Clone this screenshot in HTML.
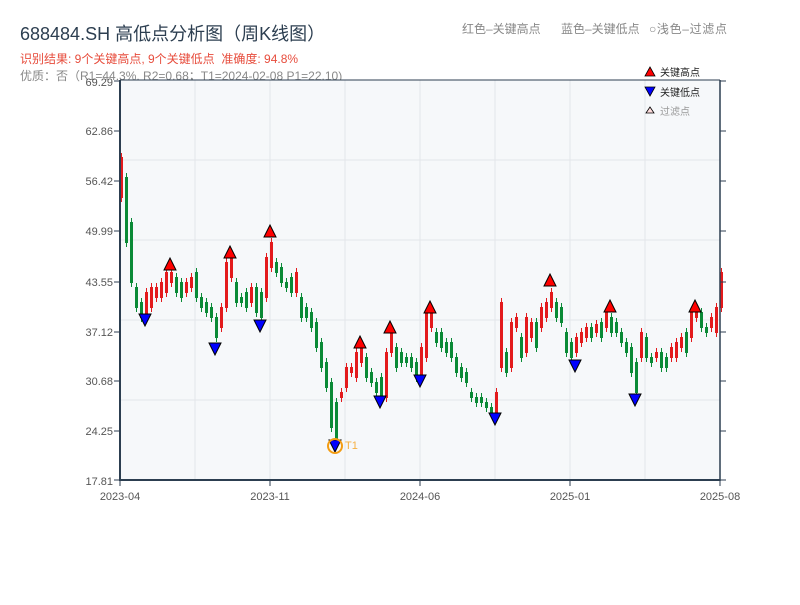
<!DOCTYPE html>
<html><head><meta charset="utf-8"><style>
body{margin:0;width:800px;height:600px;background:#fff;overflow:hidden;font-family:"Liberation Sans","Noto Sans CJK SC",sans-serif}
</style></head><body>
<svg width="800" height="600" xmlns="http://www.w3.org/2000/svg" font-family="Liberation Sans, Noto Sans CJK SC, sans-serif">
<text x="20" y="40" font-size="18" fill="#2c3e50">688484.SH 高低点分析图（周K线图）</text>
<text x="20" y="63" font-size="12" fill="#e74c3c">识别结果: 9个关键高点, 9个关键低点&#160;&#160;准确度: 94.8%</text>
<text x="20" y="80" font-size="12" fill="#888">优质：否（R1=44.3%, R2=0.68；T1=2024-02-08 P1=22.10)</text>
<text x="462" y="33" font-size="12" fill="#888">红色–关键高点</text>
<text x="561" y="33" font-size="12" fill="#888">蓝色–关键低点</text>
<text x="649" y="33" font-size="12" fill="#888" textLength="78">○浅色–过滤点</text>
<rect x="120" y="80" width="600" height="400" fill="#f6f8fa"/>
<g stroke="#e3e6ea" stroke-width="1">
<line x1="120" y1="160" x2="720" y2="160"/><line x1="120" y1="240" x2="720" y2="240"/><line x1="120" y1="320" x2="720" y2="320"/><line x1="120" y1="400" x2="720" y2="400"/>
<line x1="195" y1="80" x2="195" y2="480"/><line x1="270" y1="80" x2="270" y2="480"/><line x1="345" y1="80" x2="345" y2="480"/><line x1="420" y1="80" x2="420" y2="480"/><line x1="495" y1="80" x2="495" y2="480"/><line x1="570" y1="80" x2="570" y2="480"/><line x1="645" y1="80" x2="645" y2="480"/>
</g>
<g id="c"></g>
<g id="m" stroke="#000" stroke-width="1"></g>
<circle cx="335" cy="446" r="7" fill="none" stroke="#f39c12" stroke-width="2"/>
<text x="345" y="449" font-size="11" fill="#f5b041">T1</text>
<g stroke="#2c3e50" stroke-width="2" fill="none">
<line x1="120" y1="80" x2="720" y2="80" stroke-width="1"/>
<line x1="120" y1="80" x2="120" y2="481"/><line x1="120" y1="480" x2="720" y2="480"/><line x1="720" y1="80" x2="720" y2="481" stroke-width="1.5"/>
</g>
<g stroke="#2c3e50" stroke-width="1" id="t"></g>
<g font-size="11" fill="#555" text-anchor="end">
<text x="113" y="86">69.29</text><text x="113" y="135">62.86</text><text x="113" y="185">56.42</text><text x="113" y="235">49.99</text><text x="113" y="286">43.55</text><text x="113" y="336">37.12</text><text x="113" y="385">30.68</text><text x="113" y="435">24.25</text><text x="113" y="485">17.81</text>
</g>
<g font-size="11" fill="#555" text-anchor="middle">
<text x="120" y="500">2023-04</text><text x="270" y="500">2023-11</text><text x="420" y="500">2024-06</text><text x="570" y="500">2025-01</text><text x="720" y="500">2025-08</text>
</g>
<polygon points="650,67 655,76 645,76" fill="#f00" stroke="#000" stroke-width="0.8"/>
<text x="660" y="76" font-size="10" fill="#222">关键高点</text>
<polygon points="645,87 655,87 650,96" fill="#00f" stroke="#000" stroke-width="0.8"/>
<text x="660" y="96" font-size="10" fill="#222">关键低点</text>
<polygon points="650,107 654,113 646,113" fill="#fdd" stroke="#000" stroke-width="0.8"/>
<text x="660" y="115" font-size="10" fill="#999">过滤点</text>
</svg>
<script>
var d=[[155,200],[175,245],[220,285],[285,310],[300,320],[290,320],[285,310],[285,300],[280,300],[270,295],[270,285],[275,295],[280,300],[280,295],[275,290],[270,300],[295,310],[300,315],[305,320],[315,340],[305,330],[260,310],[255,280],[280,305],[295,305],[290,310],[285,305],[285,315],[290,320],[255,300],[240,270],[260,275],[265,285],[280,290],[275,295],[270,295],[295,320],[305,320],[310,330],[320,350],[340,370],[360,390],[380,430],[400,445],[390,400],[365,390],[365,375],[350,380],[345,365],[355,380],[370,385],[380,395],[375,400],[350,400],[330,355],[345,370],[350,365],[355,365],[355,370],[360,380],[345,380],[310,360],[310,330],[330,345],[330,350],[340,355],[340,360],[355,375],[365,380],[370,385],[390,400],[395,405],[395,405],[400,410],[405,415],[390,415],[300,370],[350,375],[320,370],[315,330],[335,360],[315,355],[320,340],[320,350],[305,330],[300,320],[290,310],[300,320],[305,325],[330,355],[340,360],[335,355],[330,345],[325,340],[325,340],[322,335],[320,340],[310,330],[315,335],[320,335],[330,345],[340,355],[345,375],[360,395],[330,360],[335,360],[355,365],[350,360],[350,370],[355,370],[345,360],[340,360],[335,350],[330,355],[310,340],[305,320],[310,330],[325,335],[315,330],[305,335],[270,310]];
var s='',p=null;
d.forEach(function(c,i){var x=120+i*5,m=(c[0]+c[1])/2,up=p===null?true:m<p;p=m;var col=up?'#e31a1c':'#0a8a36';
s+='<line x1="'+(x+1.5)+'" y1="'+(c[0]-2)+'" x2="'+(x+1.5)+'" y2="'+(c[1]+2)+'" stroke="'+col+'" stroke-width="1"/>';
s+='<rect x="'+x+'" y="'+(c[0]+2)+'" width="3" height="'+Math.max(2,c[1]-c[0]-4)+'" fill="'+col+'"/>';});
document.getElementById('c').innerHTML=s;
var H=[[170,264],[230,252],[270,231],[360,342],[390,327],[430,307],[550,280],[610,306],[695,306]],L=[[145,320],[215,349],[260,326],[335,446],[380,402],[420,381],[495,419],[575,366],[635,400]],m='';
H.forEach(function(a){m+='<polygon points="'+a[0]+','+(a[1]-6)+' '+(a[0]+6)+','+(a[1]+6)+' '+(a[0]-6)+','+(a[1]+6)+'" fill="#f00"/>';});
L.forEach(function(a){m+='<polygon points="'+(a[0]-6)+','+(a[1]-6)+' '+(a[0]+6)+','+(a[1]-6)+' '+a[0]+','+(a[1]+6)+'" fill="#00f"/>';});
document.getElementById('m').innerHTML=m;
var t='';[81,131,181,231,282,332,381,431,480].forEach(function(y){t+='<line x1="114" y1="'+y+'" x2="120" y2="'+y+'"/><line x1="720" y1="'+y+'" x2="726" y2="'+y+'"/>';});
[120,270,420,570,720].forEach(function(x){t+='<line x1="'+x+'" y1="480" x2="'+x+'" y2="486"/>';});
document.getElementById('t').innerHTML=t;
</script>
</body></html>
